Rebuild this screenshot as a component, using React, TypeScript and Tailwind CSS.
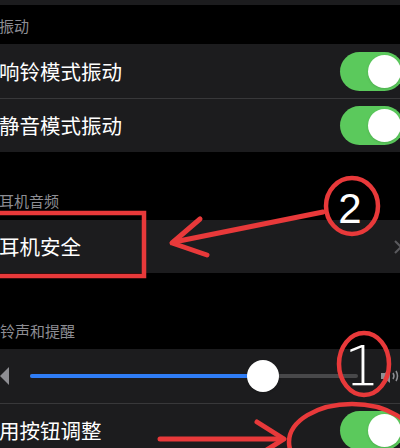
import React from 'react';

const font = { fontFamily: '"Noto Sans CJK SC", "Noto Sans", sans-serif' };

function Toggle() {
  return (
    <div className="flex h-[39px] w-[64px] shrink-0 items-center justify-end rounded-full bg-[#5bc95c] p-[3px]">
      <div className="h-[33px] w-[33px] rounded-full bg-white shadow" />
    </div>
  );
}

function SectionHeader({ label, className }: { label: string; className: string }) {
  return (
    <div className={`flex items-end text-[15px] leading-[22px] text-[#8d8d93] ${className}`}>{label}</div>
  );
}

function ToggleRow({ label, border }: { label: string; border?: boolean }) {
  return (
    <div
      className={`flex h-[54px] items-center justify-between text-[20.5px] text-white ${
        border ? 'border-t border-[#38383a]' : ''
      }`}
    >
      <span className="-ml-[1px]">{label}</span>
      <div className="-mr-[4px]">
        <Toggle />
      </div>
    </div>
  );
}

function Annotations() {
  const red = '#e8393a';
  return (
    <svg className="pointer-events-none absolute inset-0" width="400" height="448" viewBox="0 0 400 448">
      {/* box around 耳机安全 */}
      <rect x="-6" y="213" width="150" height="63" fill="none" stroke={red} strokeWidth="4.5" />
      {/* arrow 2 */}
      <path d="M323 212 L174 242" stroke={red} strokeWidth="5" strokeLinecap="round" fill="none" />
      <path d="M200 219 L172 243 L207 255" stroke={red} strokeWidth="5" strokeLinecap="round" strokeLinejoin="round" fill="none" />
      <ellipse cx="352" cy="206" rx="26" ry="28" fill="none" stroke={red} strokeWidth="4.5" />
      <text x="350" y="223" textAnchor="middle" fill="#fff" fontSize="42" fontFamily="Liberation Sans, sans-serif">2</text>
      {/* circle 1 */}
      <ellipse cx="364" cy="364" rx="25" ry="31" fill="none" stroke={red} strokeWidth="4.5" />
      <text x="362" y="385" textAnchor="middle" fill="#fff" fontSize="56" fontFamily="DejaVu Sans, sans-serif" fontWeight="200">1</text>
      {/* ellipse around toggle + arrow */}
      <ellipse cx="352" cy="442" rx="63" ry="38" fill="none" stroke={red} strokeWidth="4.5" />
      <path d="M160 439 L283 439" stroke={red} strokeWidth="5" strokeLinecap="round" fill="none" />
      <path d="M257 422 L284 439 L257 456" stroke={red} strokeWidth="5" strokeLinecap="round" strokeLinejoin="round" fill="none" />
    </svg>
  );
}

export default function App() {
  return (
    <div className="relative h-[448px] w-[400px] overflow-hidden bg-black" style={font}>
      <div className="h-[5px] bg-[#1c1c1e]" />
      <SectionHeader label="振动" className="h-[36px] pb-[4px] -ml-[1px]" />
      <div className="bg-[#1c1c1e] mt-[3px]">
        <ToggleRow label="响铃模式振动" />
        <ToggleRow label="静音模式振动" border />
      </div>

      <SectionHeader label="耳机音频" className="h-[60px] pb-0 -ml-[1px]" />
      <div className="mt-[8px] flex h-[53px] items-center justify-between bg-[#1c1c1e] text-[20.5px] text-white">
        <span className="-ml-[1px]">耳机安全</span>
        <svg width="10" height="14" viewBox="0 0 10 14" className="-mr-[3px]">
          <path d="M2 1 L8 7 L2 13" stroke="#5a5a5e" strokeWidth="2" fill="none" />
        </svg>
      </div>

      <SectionHeader label="铃声和提醒" className="h-[69px] pb-0" />
      <div className="mt-[7px] bg-[#1c1c1e]">
        <div className="flex h-[54px] items-center gap-[21px]">
          <svg width="9" height="18" viewBox="0 0 9 18">
            <path d="M9 0 L0 9 L9 18 Z" fill="#8e8e93" />
          </svg>
          <div className="relative flex h-[4px] w-[328px] items-center rounded-full bg-[#48484a]">
            <div className="h-[4px] w-[233px] rounded-full bg-[#2f7df6]" />
            <div className="absolute left-[217px] h-[32px] w-[32px] rounded-full bg-white shadow" />
          </div>
          <svg width="22" height="16" viewBox="0 0 22 16" className="ml-auto -mr-[2px]">
            <path d="M1 5 H5 L10 1 V15 L5 11 H1 Z" fill="#8e8e93" />
            <path d="M13 5 Q15 8 13 11" stroke="#8e8e93" strokeWidth="1.5" fill="none" />
            <path d="M16 3 Q19 8 16 13" stroke="#8e8e93" strokeWidth="1.5" fill="none" />
          </svg>
        </div>
        <ToggleRow label="用按钮调整" border />
      </div>

      <Annotations />
    </div>
  );
}
